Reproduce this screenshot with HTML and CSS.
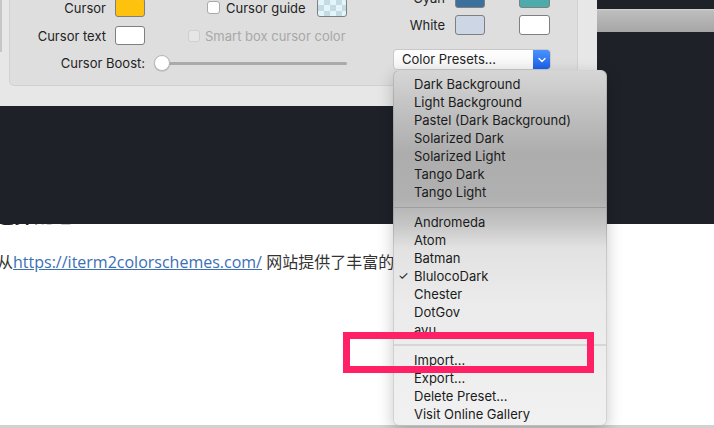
FILE: index.html
```html
<!DOCTYPE html>
<html lang="zh-CN">
<head>
<meta charset="utf-8">
<title>Color Presets</title>
<link rel="stylesheet" href="styles.css">
</head>
<body>
<div class="screen">
  <div class="top">
    <div class="prefs">
      <div class="edge"></div>
      <div class="panel">
        <div class="lcol">
          <div class="row r1">
            <span class="lbl w96">Cursor</span>
            <span class="sw yellow"></span>
            <span class="cb"></span>
            <span class="cblbl w91">Cursor guide</span>
            <span class="sw checker"></span>
          </div>
          <div class="row r2">
            <span class="lbl w96">Cursor text</span>
            <span class="sw plain"></span>
            <span class="cb dis"></span>
            <span class="cblbl dis">Smart box cursor color</span>
          </div>
          <div class="row r3">
            <span class="lbl w135">Cursor Boost:</span>
            <div class="slider"><span class="track"></span><span class="knob"></span></div>
          </div>
        </div>
        <div class="rcol">
          <div class="row c1">
            <span class="lbl w52">Cyan</span>
            <span class="sw cyan1"></span>
            <span class="sw cyan2 second"></span>
          </div>
          <div class="row c2">
            <span class="lbl w52">White</span>
            <span class="sw white1"></span>
            <span class="sw plain second"></span>
          </div>
          <div class="popup">
            <span class="ptext">Color Presets...</span>
            <span class="parrow"><svg width="10" height="6" viewBox="0 0 10 6"><path d="M2 1.5 L5 4.5 L8 1.5" fill="none" stroke="#fff" stroke-width="1.4" stroke-linecap="round" stroke-linejoin="round"/></svg></span>
          </div>
        </div>
      </div>
    </div>
    <div class="side"><div class="titlebar"></div></div>
  </div>
  <div class="band"></div>
  <div class="page">
    <div class="hclip"><h2 class="heading">选择配色</h2></div>
    <p class="para">从<a href="#" class="link">https://iterm2colorschemes.com/</a> 网站提供了丰富的</p>
  </div>
  <div class="foot"></div>

  <div class="menu">
    <div class="item">Dark Background</div>
    <div class="item">Light Background</div>
    <div class="item">Pastel (Dark Background)</div>
    <div class="item">Solarized Dark</div>
    <div class="item">Solarized Light</div>
    <div class="item">Tango Dark</div>
    <div class="item">Tango Light</div>
    <div class="sep dark"></div>
    <div class="item">Andromeda</div>
    <div class="item">Atom</div>
    <div class="item">Batman</div>
    <div class="item checked"><span class="check">✓</span>BlulocoDark</div>
    <div class="item">Chester</div>
    <div class="item">DotGov</div>
    <div class="item">ayu</div>
    <div class="sep"></div>
    <div class="item">Import...</div>
    <div class="item">Export...</div>
    <div class="item">Delete Preset...</div>
    <div class="item">Visit Online Gallery</div>
  </div>
  <div class="mark"></div>
</div>
</body>
</html>
```

FILE: styles.css
```css
* { box-sizing: border-box; }
html, body { margin: 0; padding: 0; }
body { width: 714px; height: 428px; overflow: hidden; background: #fff; }

.screen {
  position: relative;
  width: 714px;
  height: 428px;
  overflow: hidden;
  font-family: Inter, "Liberation Sans", sans-serif;
  font-size: 13px;
  color: #232323;
}

.top {
  display: flex;
  height: 106px;
  background: #1f2129;
}

.prefs {
  width: 597px;
  height: 106px;
  background: #e7e7e7;
  border-bottom-right-radius: 6px;
  display: flex;
  align-items: flex-start;
}

.edge {
  width: 2px;
  height: 52px;
  background: #c6c6c6;
}

.panel {
  margin-left: 7px;
  width: 569px;
  height: 86px;
  background: #dedede;
  border: 1px solid #d1d1d1;
  border-top: none;
  border-radius: 0 0 5px 5px;
  display: flex;
  align-items: flex-start;
}

.lcol { width: 337px; display: flex; flex-direction: column; }
.rcol { width: 158px; margin-left: 46px; display: flex; flex-direction: column; }

.row { display: flex; align-items: center; }
.r1 { margin-top: -2px; height: 19px; }
.r2 { margin-top: 9px; height: 19px; }
.r3 { margin-top: 10px; height: 16px; }
.c1 { margin-top: -12px; height: 20px; }
.c2 { margin-top: 7px; height: 20px; }

.lbl { text-align: right; white-space: nowrap; }
.w96 { width: 96px; }
.w135 { width: 135px; }
.w52 { width: 52px; }

.sw {
  width: 30px;
  height: 100%;
  margin-left: 9px;
  border: 1px solid #7f7f7f;
  border-radius: 3px;
  flex: none;
}
.c1 .sw, .c2 .sw { margin-left: 10px; }
.c1 .second, .c2 .second { margin-left: 34px; width: 31px; }
.r1 .checker { margin-left: 0; }

.yellow { background: #fdc20e; }
.plain { background: #ffffff; }
.cyan1 { background: #3b6f9c; }
.cyan2 { background: #4eabab; }
.white1 { background: #ccd6e5; }
.checker {
  background: repeating-conic-gradient(#c5dbe4 0 25%, #e4f4fb 0 50%) 0 0 / 12px 12px;
}

.cb {
  width: 13px;
  height: 13px;
  margin-left: 62px;
  background: #fff;
  border: 1px solid #a9a9a9;
  border-radius: 3px;
  flex: none;
}
.cb.dis {
  width: 12px;
  height: 12px;
  margin-left: 43px;
  background: #e6e6e6;
  border-color: #cfcfcf;
}
.cblbl { margin-left: 6px; white-space: nowrap; }
.w91 { width: 91px; }
.cblbl.dis { margin-left: 5px; color: #a8a8a8; }

.slider {
  position: relative;
  width: 193px;
  height: 16px;
  margin-left: 9px;
  display: flex;
  align-items: center;
}
.track {
  margin-left: 7px;
  flex: 1;
  height: 3px;
  border-radius: 2px;
  background: #aaaaaa;
}
.knob {
  position: absolute;
  left: 0;
  top: 0;
  width: 16px;
  height: 16px;
  border-radius: 50%;
  background: #fff;
  border: 1px solid #b9b9b9;
  box-shadow: 0 0.5px 1px rgba(0,0,0,0.2);
}

.popup {
  margin-top: 14px;
  width: 158px;
  height: 21px;
  display: flex;
  border: 1px solid #c8c8c8;
  border-radius: 4px;
  background: linear-gradient(#ffffff, #f4f4f4);
  overflow: hidden;
}
.ptext { flex: 1; padding-left: 8px; line-height: 19px; white-space: nowrap; }
.parrow {
  width: 17px;
  background: linear-gradient(#4a93fb, #1c5fe9);
  display: flex;
  align-items: center;
  justify-content: center;
}

.side { flex: 1; }
.titlebar {
  margin-top: 9px;
  height: 23px;
  background: linear-gradient(#d4d4d4 0, #bdbdbd 2px, #a6a6a6 100%);
}

.band { height: 118px; background: #1f2129; }

.page {
  height: 201px;
  background: #fff;
  font-family: "Open Sans", "Noto Sans CJK SC", sans-serif;
}
.hclip { height: 4px; overflow: hidden; }
.heading {
  margin: -21px 0 0 -6px;
  font-family: "Noto Sans CJK SC", sans-serif;
  font-size: 20px;
  line-height: 24px;
  font-weight: 700;
  color: #222;
}
.para {
  margin: 22px 0 0 -3px;
  font-size: 16px;
  line-height: 24px;
  color: #333;
  white-space: nowrap;
}
.link { color: #3b6fb6; text-decoration: underline; font-family: "Open Sans", sans-serif; }

.foot { height: 3px; background: #d2d2d2; }

.menu {
  position: absolute;
  left: 393px;
  top: 70px;
  width: 214px;
  height: 356px;
  padding: 4px 0;
  border-radius: 6px;
  border: 1px solid rgba(0,0,0,0.12);
  background: linear-gradient(#d6d6d6 0%, #c3c3c3 10%, #adadad 23%, #b0b0b0 36%, #c4c4c4 43%, #e2e2e2 50%, #ebebeb 65%, #f1f1f1 100%);
  box-shadow: 0 5px 16px rgba(0,0,0,0.22);
}
.item {
  position: relative;
  height: 18px;
  line-height: 18px;
  padding-left: 20px;
  color: #1b1b1b;
  white-space: nowrap;
}
.check { position: absolute; left: 4px; top: 0; font-size: 12px; }
.sep { height: 12px; display: flex; align-items: center; }
.sep::before { content: ""; flex: 1; height: 2px; background: #d6d6d6; }
.sep.dark::before { background: #9d9d9d; height: 1px; }

.mark {
  position: absolute;
  left: 343px;
  top: 332px;
  width: 251px;
  height: 41px;
  border: 7px solid #ff2066;
}
```
